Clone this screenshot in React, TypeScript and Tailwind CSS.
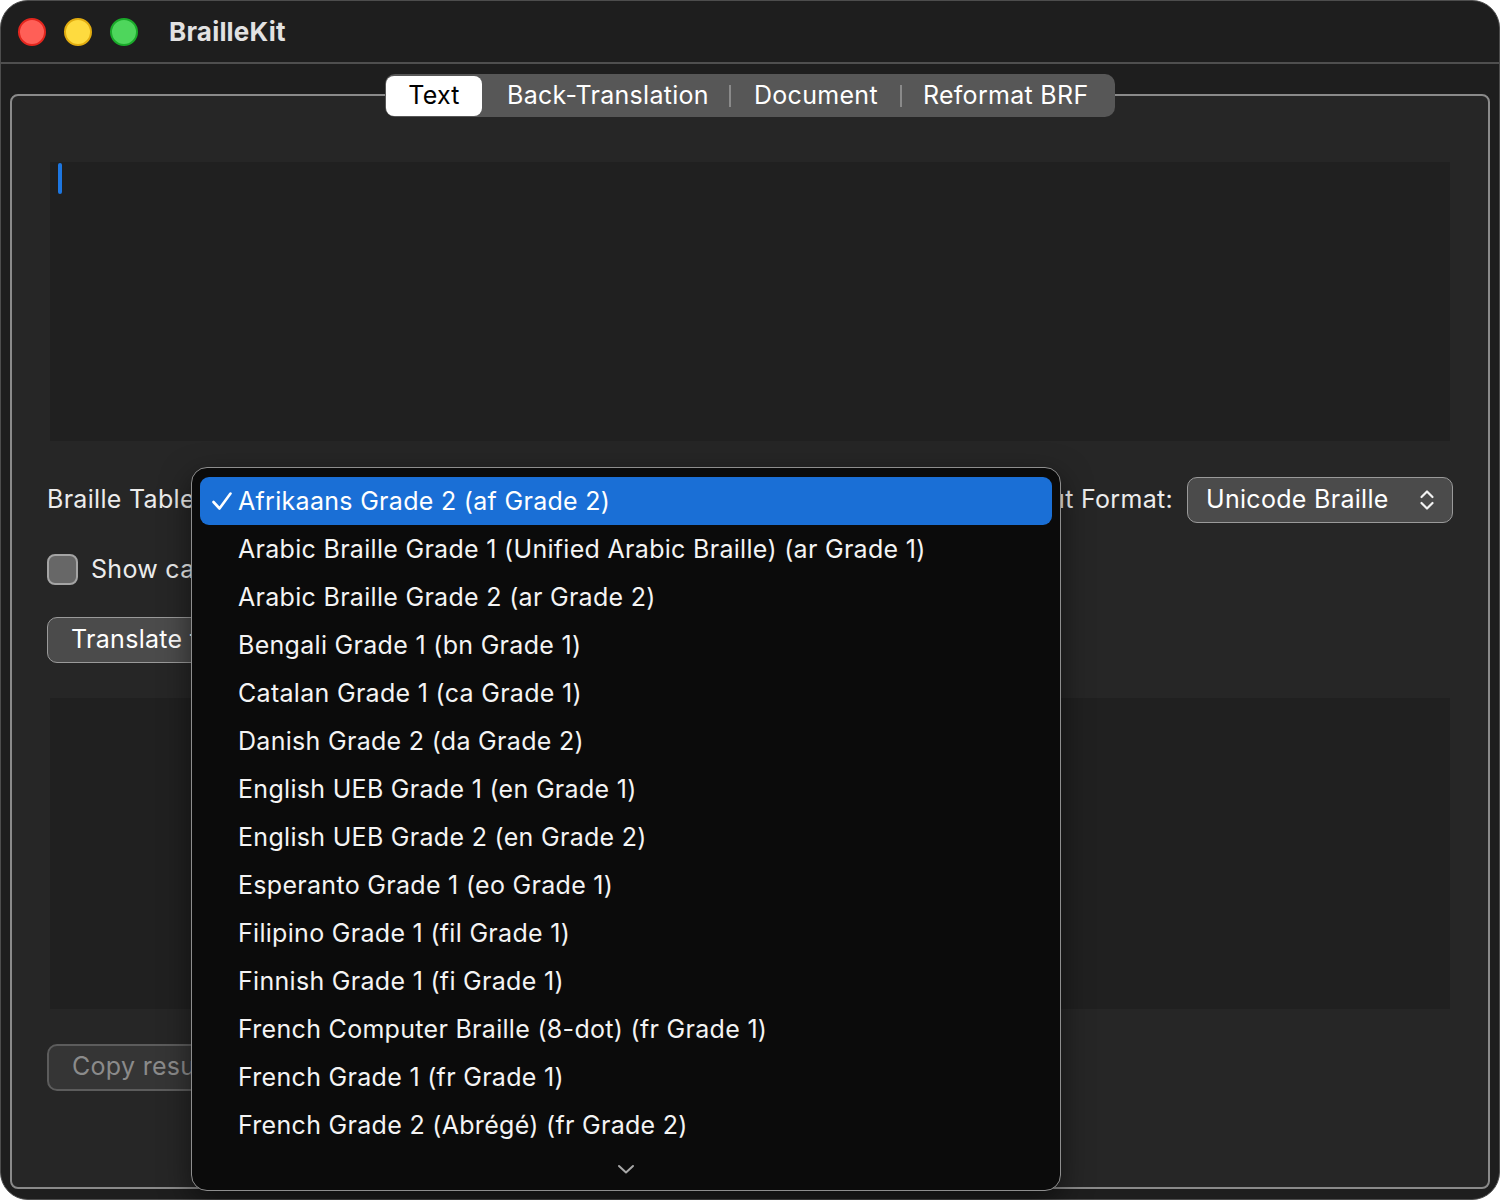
import React from "react";

const tables = [
  "Afrikaans Grade 2 (af Grade 2)",
  "Arabic Braille Grade 1 (Unified Arabic Braille) (ar Grade 1)",
  "Arabic Braille Grade 2 (ar Grade 2)",
  "Bengali Grade 1 (bn Grade 1)",
  "Catalan Grade 1 (ca Grade 1)",
  "Danish Grade 2 (da Grade 2)",
  "English UEB Grade 1 (en Grade 1)",
  "English UEB Grade 2 (en Grade 2)",
  "Esperanto Grade 1 (eo Grade 1)",
  "Filipino Grade 1 (fil Grade 1)",
  "Finnish Grade 1 (fi Grade 1)",
  "French Computer Braille (8-dot) (fr Grade 1)",
  "French Grade 1 (fr Grade 1)",
  "French Grade 2 (Abrégé) (fr Grade 2)",
];

function UpDownChevrons() {
  return (
    <svg width="16" height="22" viewBox="0 0 16 22" fill="none" stroke="#f2f2f2" strokeWidth="2.2" strokeLinecap="round" strokeLinejoin="round">
      <path d="M2.5 8 L8 2.5 L13.5 8" />
      <path d="M2.5 14 L8 19.5 L13.5 14" />
    </svg>
  );
}

function TableMenu() {
  return (
    <div className="absolute left-[191px] top-[467px] w-[870px] h-[724px] rounded-[16px] border border-[#8e8e8e] bg-[#0b0b0b] shadow-[0_10px_30px_rgba(0,0,0,0.5)] px-[8px] pt-[9px] flex flex-col">
      {tables.map((t, i) => (
        <div
          key={t}
          className={
            i === 0
              ? "h-[48px] shrink-0 rounded-[9px] bg-[#1a6fd6] flex items-center text-white"
              : "h-[48px] shrink-0 flex items-center text-[#f4f4f4]"
          }
        >
          <div className="w-[38px] shrink-0 flex justify-end pr-[5px]">
            {i === 0 && (
              <svg width="22" height="20" viewBox="0 0 22 20" fill="none" stroke="#ffffff" strokeWidth="2.6" strokeLinecap="round" strokeLinejoin="round">
                <path d="M2.5 11 L8.5 17.5 L19.5 2.5" />
              </svg>
            )}
          </div>
          <span className="text-[25px] leading-none tracking-[0.3px] whitespace-nowrap">{t}</span>
        </div>
      ))}
      <div className="flex-1 flex items-center justify-center pb-[2px]">
        <svg width="18" height="10" viewBox="0 0 18 10" fill="none" stroke="#a8a8a8" strokeWidth="2" strokeLinecap="round" strokeLinejoin="round">
          <path d="M2 2 L9 8.5 L16 2" />
        </svg>
      </div>
    </div>
  );
}

export default function App() {
  return (
    <div className="relative w-[1500px] h-[1200px] bg-white overflow-hidden font-['Inter','Noto_Sans',sans-serif] tracking-[0.3px]">
      <div className="h-full rounded-[28px] bg-[#1e1e1e] border border-[#4d4d4d] overflow-hidden flex flex-col">
        {/* title bar */}
        <div className="h-[61px] shrink-0 flex items-center pl-[17px]">
          <div className="flex items-center gap-[18px]">
            <span className="w-[28px] h-[28px] rounded-full bg-[#ff5f57] border-2 border-[#e3261e]" />
            <span className="w-[28px] h-[28px] rounded-full bg-[#fedb3f] border-2 border-[#e2ad10]" />
            <span className="w-[28px] h-[28px] rounded-full bg-[#4ed65c] border-2 border-[#1aaa2a]" />
          </div>
          <span className="ml-[31px] text-[26px] font-bold text-[#e2e2e2] tracking-[0.2px]">BrailleKit</span>
        </div>
        <div className="h-[2px] shrink-0 bg-[#4f4f4f]" />

        {/* content */}
        <div className="flex-1 px-[9px] pt-[30px] pb-[10px] flex flex-col">
          <div className="flex-1 rounded-[8px] border-2 border-[#8a8a8a] bg-[#262626] flex flex-col">
            {/* segmented tabs */}
            <div className="flex justify-center -mt-[22px]">
              <div className="h-[43px] w-[730px] rounded-[10px] bg-[#575757] flex items-center px-[1px] text-[25px] text-white">
                <div className="h-[40px] w-[96px] rounded-[8px] bg-white text-black flex items-center justify-center">Text</div>
                <span className="ml-[25px]">Back-Translation</span>
                <span className="ml-[20px] mr-[23px] w-[2px] h-[22px] bg-[#8a8a8a]" />
                <span>Document</span>
                <span className="ml-[22px] mr-[21px] w-[2px] h-[22px] bg-[#8a8a8a]" />
                <span>Reformat BRF</span>
              </div>
            </div>

            {/* input editor */}
            <div className="mx-[38px] mt-[45px] h-[279px] bg-[#202020] pl-[8px] pt-[1px]">
              <div className="w-[4px] h-[31px] rounded-full bg-[#1d76e0]" />
            </div>

            {/* table + format row */}
            <div className="mx-[35px] mt-[36px] h-[46px] flex items-center justify-between text-[25px] text-[#ececec]">
              <div className="flex items-center gap-[12px]">
                <span>Braille Table:</span>
                <div className="h-[46px] w-[420px] rounded-[10px] bg-[#4b4b4b]" />
              </div>
              <div className="flex items-center gap-[14px]">
                <span>Output Format:</span>
                <div className="w-[266px] h-[46px] rounded-[10px] bg-[#4b4b4b] border border-[#9a9a9a] pl-[18px] pr-[17px] flex items-center justify-between text-white">
                  <span>Unicode Braille</span>
                  <UpDownChevrons />
                </div>
              </div>
            </div>

            {/* options */}
            <div className="mx-[35px] mt-[28px] flex items-center gap-[13px] text-[25px] text-[#ececec]">
              <span className="w-[31px] h-[31px] rounded-[8px] bg-[#676767] border-2 border-[#a4a4a4]" />
              <span>Show capital signs</span>
            </div>

            <div className="mx-[35px] mt-[28px] flex">
              <div className="h-[46px] rounded-[10px] bg-[#4b4b4b] border border-[#9a9a9a] pl-[23px] pr-[24px] flex items-center text-[25px] text-white">
                Translate text
              </div>
            </div>

            {/* output */}
            <div className="mx-[38px] mt-[35px] h-[311px] bg-[#202020]" />

            <div className="mx-[35px] mt-[35px] flex">
              <div className="h-[47px] rounded-[10px] bg-[#353535] border-2 border-[#5c5c5c] pl-[23px] pr-[24px] flex items-center text-[25px] text-[#8b8b8b]">
                Copy result
              </div>
            </div>
          </div>
        </div>
      </div>

      <TableMenu />
    </div>
  );
}
